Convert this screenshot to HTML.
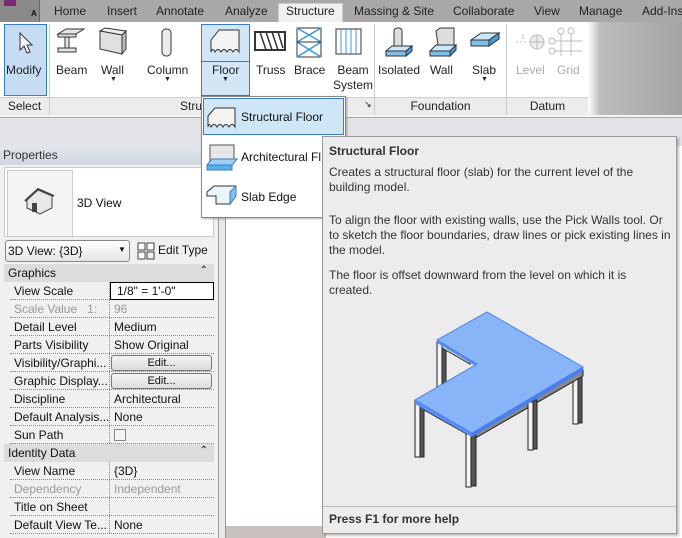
<!DOCTYPE html>
<html><head><meta charset="utf-8"><style>
*{margin:0;padding:0;box-sizing:border-box}
body{width:682px;height:538px;overflow:hidden;position:relative;font-family:"Liberation Sans",sans-serif;font-size:12px;color:#111;background:#e1e3e6}
.a{position:absolute;white-space:nowrap}
.tab{position:absolute;top:4px;font-size:12px;color:#222;white-space:nowrap}
.lbl{position:absolute;font-size:12px;color:#222;text-align:center;white-space:nowrap}
.row{position:absolute;left:10px;width:204px;height:18px;border-bottom:1px dotted #888}
.row span{position:absolute;top:2px;white-space:nowrap}
.row .k{left:4px}.row .v{left:104px}
.row i{position:absolute;left:99px;top:0;bottom:0;border-left:1px dotted #888}
.hd{position:absolute;left:4px;width:210px;height:18px;background:#dcdcdc;font-size:12px}
.btn{position:absolute;left:101px;top:1px;width:101px;height:16px;border:1px solid #777;border-radius:3px;background:linear-gradient(#f4f4f4,#dcdcdc);text-align:center;font-size:11px;line-height:14px}
.tt{font-size:12px;color:#333;line-height:15px;white-space:normal}
</style></head><body>
<div class="a" style="left:0;top:0;width:682px;height:22px;background:#a8a8a8"></div>
<div class="a" style="left:0;top:0;width:40px;height:22px;background:#8a8a8a;border-right:1px solid #666"></div>
<div class="a" style="left:4px;top:0;width:12px;height:6px;background:#7a2a78"></div>
<div class="a" style="left:31px;top:9px;font-size:8px;font-weight:bold">A</div>
<div class="a" style="left:278px;top:3px;width:65px;height:20px;background:#f0f0f0;border:1px solid #ccc;border-bottom:none"></div>
<div class="tab" style="left:54px">Home</div>
<div class="tab" style="left:107px">Insert</div>
<div class="tab" style="left:156px">Annotate</div>
<div class="tab" style="left:225px">Analyze</div>
<div class="tab" style="left:286px">Structure</div>
<div class="tab" style="left:354px">Massing &amp; Site</div>
<div class="tab" style="left:453px">Collaborate</div>
<div class="tab" style="left:534px">View</div>
<div class="tab" style="left:579px">Manage</div>
<div class="tab" style="left:642px">Add-Ins</div>
<div class="a" style="left:0;top:22px;width:682px;height:94px;background:linear-gradient(90deg,#fff 0,#fff 588px,#bdbdbd 600px,#a4a4a4 682px)"></div>
<div class="a" style="left:0;top:97px;width:588px;height:18px;background:#ececec;border-top:1px solid #d0d0d0"></div>
<div class="a" style="left:49px;top:24px;width:1px;height:92px;background:#ccc"></div>
<div class="a" style="left:374px;top:24px;width:1px;height:92px;background:#ccc"></div>
<div class="a" style="left:506px;top:24px;width:1px;height:92px;background:#ccc"></div>
<div class="a" style="left:0;top:115px;width:682px;height:3px;background:#f4f4f4;border-bottom:1px solid #aaa"></div>
<div class="lbl" style="left:0;top:99px;width:49px">Select</div>
<div class="lbl" style="left:180px;top:99px">Stru</div>
<div class="lbl" style="left:364px;top:99px;font-size:9px">↘</div>
<div class="lbl" style="left:375px;top:99px;width:131px">Foundation</div>
<div class="lbl" style="left:507px;top:99px;width:81px">Datum</div>
<div class="a" style="left:4px;top:24px;width:43px;height:72px;background:#c6dcf2;border:1px solid #3a7cc8"></div>
<svg class="a" style="left:18px;top:32px" width="16" height="22"><path d="M2 1 L2 18 L6 14 L9 21 L12 20 L9 13 L14 13 Z" fill="#fff" stroke="#333"/></svg>
<div class="lbl" style="left:6px;top:63px">Modify</div>
<svg class="a" style="left:56px;top:28px" width="30" height="28"><path d="M2 6 L10 1 L28 1 L20 6Z M2 6 L20 6 L20 9 L2 9Z M9 9 L13 9 L13 20 L9 20Z M2 20 L20 20 L20 24 L2 24Z" fill="#e4e4e4" stroke="#333"/></svg>
<div class="lbl" style="left:56px;top:63px">Beam</div>
<svg class="a" style="left:98px;top:27px" width="30" height="30"><path d="M2 4 L24 8 L28 4 L7 1Z" fill="#eee" stroke="#333"/><path d="M2 4 L24 8 L24 27 L2 22Z" fill="#e0e0e0" stroke="#333"/><path d="M24 8 L28 4 L28 22 L24 27Z" fill="#bbb" stroke="#333"/></svg>
<div class="lbl" style="left:101px;top:63px">Wall</div>
<div class="lbl" style="left:110px;top:76px;font-size:7px">▼</div>
<svg class="a" style="left:161px;top:28px" width="12" height="30"><rect x="1" y="1" width="9" height="27" rx="4" fill="#ececec" stroke="#333"/></svg>
<div class="lbl" style="left:147px;top:63px">Column</div>
<div class="lbl" style="left:164px;top:76px;font-size:7px">▼</div>
<div class="a" style="left:201px;top:24px;width:49px;height:72px;background:#d2e6f6;border:1px solid #3a7cc8"></div>
<div class="a" style="left:201px;top:61px;width:49px;height:1px;background:#3a7cc8"></div>
<svg class="a" style="left:209px;top:28px" width="32" height="28"><path d="M2 12 L10 2 L30 2 L30 24 Q27 19 24 24 Q21 19 18 24 Q15 19 12 24 Q9 19 6 24 Q4 19 2 24Z" fill="#f4f4f4" stroke="#333"/></svg>
<div class="lbl" style="left:212px;top:63px">Floor</div>
<div class="lbl" style="left:222px;top:76px;font-size:7px">▼</div>
<svg class="a" style="left:254px;top:28px" width="32" height="24"><rect x="1" y="4" width="30" height="18" fill="#fff" stroke="#333" stroke-width="2"/><path d="M6 4 L12 22 M12 4 L18 22 M18 4 L24 22 M24 4 L29 20" stroke="#333" stroke-width="1.5"/></svg>
<div class="lbl" style="left:256px;top:63px">Truss</div>
<svg class="a" style="left:296px;top:27px" width="26" height="32"><rect x="1" y="1" width="24" height="29" fill="none" stroke="#333"/><path d="M1 1 L25 15 L1 30 M25 1 L1 15 L25 30" stroke="#3a9ae0" stroke-width="1.5" fill="none"/><path d="M1 15 L25 15" stroke="#333"/></svg>
<div class="lbl" style="left:294px;top:63px">Brace</div>
<svg class="a" style="left:335px;top:28px" width="28" height="28"><rect x="1" y="1" width="25" height="25" fill="#fff" stroke="#333"/><path d="M6 1V26M11 1V26M16 1V26M21 1V26" stroke="#3a9ae0"/></svg>
<div class="lbl" style="left:333px;top:63px;line-height:15px">Beam<br>System</div>
<svg class="a" style="left:384px;top:27px" width="30" height="32"><rect x="10" y="1" width="8" height="20" rx="3" fill="#ddd" stroke="#333"/><path d="M2 24 L8 19 L28 19 L22 24Z" fill="#cde6f8" stroke="#333"/><path d="M2 24 L22 24 L22 29 L2 29Z" fill="#7ec0ec" stroke="#333"/><path d="M22 24 L28 19 L28 24 L22 29Z" fill="#4a9ad8" stroke="#333"/></svg>
<div class="lbl" style="left:378px;top:63px">Isolated</div>
<svg class="a" style="left:428px;top:27px" width="30" height="32"><path d="M8 4 L12 1 L26 1 L26 18 L10 18Z" fill="#ddd" stroke="#333"/><path d="M2 24 L8 18 L28 18 L22 24Z" fill="#cde6f8" stroke="#333"/><path d="M2 24 L22 24 L22 29 L2 29Z" fill="#7ec0ec" stroke="#333"/><path d="M22 24 L28 18 L28 23 L22 29Z" fill="#4a9ad8" stroke="#333"/></svg>
<div class="lbl" style="left:430px;top:63px">Wall</div>
<svg class="a" style="left:469px;top:30px" width="32" height="22"><path d="M2 10 L12 3 L30 3 L20 10Z" fill="#cde6f8" stroke="#333"/><path d="M2 10 L20 10 L20 16 L2 16Z" fill="#7ec0ec" stroke="#333"/><path d="M20 10 L30 3 L30 9 L20 16Z" fill="#4a9ad8" stroke="#333"/></svg>
<div class="lbl" style="left:472px;top:63px">Slab</div>
<div class="lbl" style="left:481px;top:76px;font-size:7px">▼</div>
<svg class="a" style="left:514px;top:27px" width="70" height="30"><path d="M2 15 H12" stroke="#bbb" stroke-dasharray="2 2"/><text x="7" y="12" font-size="7" fill="#bbb" font-family="Liberation Sans">1</text><circle cx="23" cy="15" r="7" fill="#eee" stroke="#bbb"/><path d="M16 15H30M23 8V22" stroke="#bbb"/><circle cx="47" cy="4" r="3" fill="none" stroke="#bbb"/><circle cx="57" cy="4" r="3" fill="none" stroke="#bbb"/><circle cx="38" cy="14" r="3" fill="none" stroke="#bbb"/><circle cx="38" cy="24" r="3" fill="none" stroke="#bbb"/><path d="M47 7V29M57 7V29M41 14H68M41 24H68" stroke="#bbb"/></svg>
<div class="lbl" style="left:516px;top:63px;color:#aaa">Level</div>
<div class="lbl" style="left:557px;top:63px;color:#aaa">Grid</div>
<div class="a" style="left:218px;top:146px;width:8px;height:392px;background:#e8e8e8;border-left:1px solid #999;border-right:1px solid #999"></div>
<div class="a" style="left:226px;top:146px;width:456px;height:392px;background:#fff"></div>
<div class="a" style="left:226px;top:526px;width:100px;height:12px;background:#c8c0bc"></div>
<div class="a" style="left:0;top:146px;width:218px;height:392px;background:#f0f0f0;border-top:1px solid #aaa"></div>
<div class="a" style="left:0;top:146px;width:218px;height:19px;background:linear-gradient(#e2e6ec,#cfd6de)"></div>
<div class="a" style="left:3px;top:148px;font-size:12px;color:#333">Properties</div>
<div class="a" style="left:4px;top:167px;width:210px;height:70px;background:#fff;border:1px solid #ccc"></div>
<div class="a" style="left:7px;top:170px;width:66px;height:67px;background:#f4f4f4;border:1px solid #ccc"></div>
<svg class="a" style="left:24px;top:186px" width="32" height="32"><path d="M3 14 L14 4 L28 10 L28 22 L16 28 L3 22Z" fill="#e8e8e8" stroke="#444"/><path d="M1 15 L14 3 L30 10" fill="none" stroke="#444" stroke-width="2"/><rect x="8" y="17" width="5" height="9" fill="#444"/></svg>
<div class="a" style="left:77px;top:196px">3D View</div>
<div class="a" style="left:5px;top:240px;width:125px;height:22px;border:1px solid #888;border-radius:3px;background:linear-gradient(#fff,#e4e4e4)"></div>
<div class="a" style="left:8px;top:244px">3D View: {3D}</div>
<div class="a" style="left:118px;top:245px;font-size:8px">▼</div>
<svg class="a" style="left:137px;top:242px" width="18" height="18"><rect x="1" y="1" width="7" height="7" fill="#fff" stroke="#444"/><rect x="1" y="10" width="7" height="7" fill="#fff" stroke="#444"/><rect x="10" y="1" width="7" height="7" fill="#fff" stroke="#444"/><rect x="10" y="10" width="7" height="7" fill="#eee" stroke="#444"/></svg>
<div class="a" style="left:158px;top:243px">Edit Type</div>
<div class="hd" style="top:264px"><span style="position:absolute;left:4px;top:2px">Graphics</span><span style="position:absolute;right:6px;top:1px;font-size:10px">⌃</span></div>
<div class="row" style="top:282px"><span class="k">View Scale</span><i></i><div style="position:absolute;left:100px;top:0;width:104px;height:18px;border:1px solid #000;background:#fff"></div><span class="v" style="left:107px">1/8" = 1'-0"</span></div>
<div class="row" style="top:300px;color:#999"><span class="k">Scale Value&nbsp;&nbsp;&nbsp;1:</span><i></i><span class="v">96</span></div>
<div class="row" style="top:318px"><span class="k">Detail Level</span><i></i><span class="v">Medium</span></div>
<div class="row" style="top:336px"><span class="k">Parts Visibility</span><i></i><span class="v">Show Original</span></div>
<div class="row" style="top:354px"><span class="k">Visibility/Graphi...</span><i></i><div class="btn">Edit...</div></div>
<div class="row" style="top:372px"><span class="k">Graphic Display...</span><i></i><div class="btn">Edit...</div></div>
<div class="row" style="top:390px"><span class="k">Discipline</span><i></i><span class="v">Architectural</span></div>
<div class="row" style="top:408px"><span class="k">Default Analysis...</span><i></i><span class="v">None</span></div>
<div class="row" style="top:426px"><span class="k">Sun Path</span><i></i><div style="position:absolute;left:104px;top:3px;width:12px;height:12px;border:1px solid #888;background:#f4f4f4"></div></div>
<div class="hd" style="top:444px"><span style="position:absolute;left:4px;top:2px">Identity Data</span><span style="position:absolute;right:6px;top:1px;font-size:10px">⌃</span></div>
<div class="row" style="top:462px"><span class="k">View Name</span><i></i><span class="v">{3D}</span></div>
<div class="row" style="top:480px;color:#999"><span class="k">Dependency</span><i></i><span class="v">Independent</span></div>
<div class="row" style="top:498px"><span class="k">Title on Sheet</span><i></i></div>
<div class="row" style="top:516px"><span class="k">Default View Te...</span><i></i><span class="v">None</span></div>
<div class="a" style="left:201px;top:96px;width:145px;height:122px;background:#fff;border:1px solid #888;box-shadow:1px 1px 2px rgba(0,0,0,.3)"></div>
<div class="a" style="left:203px;top:98px;width:141px;height:37px;background:#cfe6f7;border:1px solid #3a7cc8"></div>
<svg class="a" style="left:206px;top:106px" width="32" height="24"><path d="M2 10 L9 2 L29 2 L29 21 Q26 16 23 21 Q20 16 17 21 Q14 16 11 21 Q8 16 5 21 Q3 16 2 21Z" fill="#f4f4f4" stroke="#333"/></svg>
<div class="a" style="left:241px;top:110px">Structural Floor</div>
<svg class="a" style="left:206px;top:141px" width="32" height="32"><path d="M4 4 L28 4 L28 22 L4 22Z" fill="#e6e6e6" stroke="#555"/><path d="M1 24 L6 18 L31 18 L26 24Z" fill="#9ccff2" stroke="#3a7cc8"/><path d="M1 24 L26 24 L26 29 L1 29Z" fill="#5aaee8" stroke="#3a7cc8"/></svg>
<div class="a" style="left:241px;top:150px">Architectural Fl</div>
<svg class="a" style="left:206px;top:184px" width="32" height="24"><path d="M1 8 L8 2 L30 2 L30 12 L24 20 L10 20 L10 12 L1 12Z" fill="#eaf4fb" stroke="#333"/><path d="M24 8 L30 2 L30 12 L24 20Z" fill="#7ec0ec" stroke="#3a7cc8"/></svg>
<div class="a" style="left:241px;top:190px">Slab Edge</div>
<div class="a" style="left:322px;top:136px;width:355px;height:398px;background:#ececec;border:1px solid #999;box-shadow:2px 2px 2px rgba(0,0,0,.25)"></div>
<div class="a tt" style="left:329px;top:144px;font-weight:bold">Structural Floor</div>
<div class="a tt" style="left:329px;top:165px;width:310px">Creates a structural floor (slab) for the current level of the building model.</div>
<div class="a tt" style="left:329px;top:213px;width:345px">To align the floor with existing walls, use the Pick Walls tool. Or to sketch the floor boundaries, draw lines or pick existing lines in the model.</div>
<div class="a tt" style="left:329px;top:268px;width:310px">The floor is offset downward from the level on which it is created.</div>
<svg class="a" style="left:400px;top:300px" width="200" height="200">
<!-- back legs -->
<g stroke="#222" stroke-width="1">
<rect x="37" y="42" width="5" height="46" fill="#f4f4f4"/><rect x="42" y="44" width="4" height="44" fill="#555"/>
<rect x="173" y="70" width="5" height="54" fill="#f4f4f4"/><rect x="178" y="68" width="4" height="55" fill="#555"/>
</g>
<!-- beams -->
<path d="M42 44 L70 60 L70 64 L42 48Z" fill="#ddd" stroke="#222"/>
<path d="M17 101 L72 132 L72 137 L17 106Z" fill="#ddd" stroke="#222"/>
<path d="M72 134 L183 70 L183 76 L72 140Z" fill="#888" stroke="#222"/>
<!-- front legs -->
<g stroke="#222">
<rect x="15" y="100" width="5" height="57" fill="#f4f4f4"/><rect x="20" y="102" width="4" height="55" fill="#555"/>
<rect x="66" y="134" width="5" height="53" fill="#f4f4f4"/><rect x="71" y="134" width="5" height="52" fill="#555"/>
<rect x="128" y="102" width="5" height="48" fill="#f4f4f4"/><rect x="133" y="100" width="4" height="49" fill="#555"/>
</g>
<!-- slab -->
<path d="M15 100 L72 133 L72 137 L15 104Z" fill="#5b8ef0"/>
<path d="M72 133 L183 67 L183 71 L72 137Z" fill="#4a7ef0"/>
<path d="M37 40 L77 64 L77 67 L37 43Z" fill="#5b8ef0"/>
<path d="M87 12 L183 67 L72 133 L15 100 L77 64 L37 40Z" fill="#88b4f8" stroke="#4a7ef0"/>
</svg>
<div class="a" style="left:323px;top:506px;width:353px;height:1px;background:#bbb"></div>
<div class="a tt" style="left:329px;top:512px;font-weight:bold">Press F1 for more help</div>
</body></html>
